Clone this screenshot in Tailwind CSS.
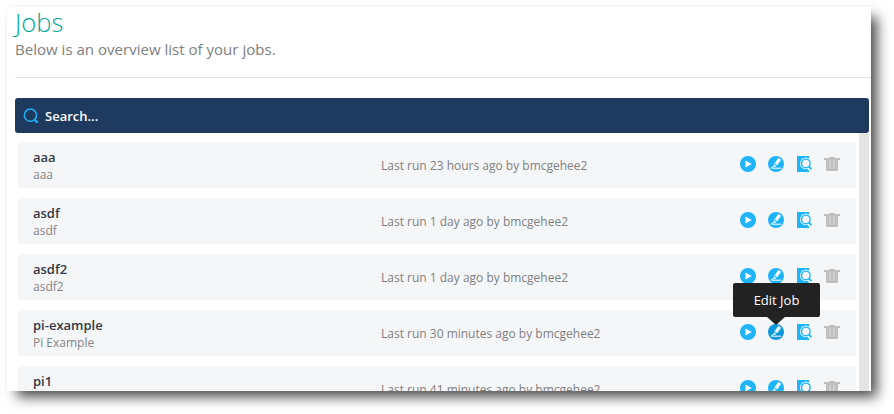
<!DOCTYPE html>
<html lang="en">
<head>
<meta charset="utf-8">
<title>Jobs</title>
<script src="https://cdn.jsdelivr.net/npm/@tailwindcss/browser@4"></script>
</head>
<body class="bg-white w-[894px] h-[414px] overflow-hidden p-[7px] font-['Open_Sans','Noto_Sans',sans-serif]">
<svg class="hidden">
  <symbol id="play" viewBox="0 0 16 16"><circle cx="8" cy="8" r="8" fill="currentColor"/><path d="M5.5 4.4 11.7 8 5.5 11.6Z" fill="#fff"/></symbol>
  <symbol id="edit" viewBox="0 0 16 16"><circle cx="8" cy="8" r="8" fill="currentColor"/><path d="M10.3 1.8 13.2 3.8 9.4 9.2 6.4 7.4ZM6 8.2 8.6 9.9 5 11.2Z" fill="#fff" fill-opacity=".9"/><path d="M3.3 12.2H13.2M3.3 11.6 5.5 10.6" stroke="#fff" stroke-width="1" fill="none"/></symbol>
  <symbol id="view" viewBox="0 0 16 16"><path d="M1 0H13V16H1Z" fill="currentColor"/><circle cx="9.8" cy="7.4" r="5.8" fill="#f5f6f8"/><path d="m12.5 11 2.6 2.6" stroke="#f5f6f8" stroke-width="4"/><circle cx="9.8" cy="7.4" r="4.3" fill="none" stroke="currentColor" stroke-width="1.4"/><path d="m12.8 10.4 2.6 2.6" stroke="currentColor" stroke-width="2"/></symbol>
  <symbol id="trash" viewBox="0 0 16 16"><path d="M0 2H5V1H11V2H16V4H14V15H2V4H0Z" fill="#bfbfbf"/><path d="M6 5V12.5M10 5V12.5" stroke="#dedad8" stroke-width="1.2"/></symbol>
</svg>
<main class="relative w-[864px] h-[384px] bg-white shadow-[8px_8px_12px_-2px_rgba(0,0,0,0.7),0_0_4px_rgba(0,0,0,0.04)]">
  <div class="h-full overflow-hidden pl-2">
    <header class="h-[71px] border-b border-[#e1e1e1]">
      <h1 class="h-8 text-[25.5px] leading-[30px] font-light text-[#00a99d]">Jobs</h1>
      <p class="text-[15.05px] leading-5 text-[#808080]">Below is an overview list of your jobs.</p>
    </header>
    <div class="mt-5 mr-0.5 h-[35px] rounded-[3px] bg-[#1e3a5f] flex items-center pl-2 pt-px">
      <svg class="w-4 h-4" viewBox="0 0 16 16" fill="none" stroke="#1fb0f5"><circle cx="7.4" cy="7.2" r="6.1" stroke-width="1.5"/><path d="m11.7 11.7 3 3" stroke-width="2.3"/></svg>
      <span class="ml-1.5 text-[13px] leading-5 font-semibold text-white">Search...</span>
    </div>
    <div class="flex mr-0.5">
      <ul id="jobs" class="w-[841px] mr-[3px] pl-[3px] pt-[9px] flex flex-col gap-2.5"></ul>
      <div class="w-2.5 bg-[#e4e4e4]"></div>
    </div>
  </div>
  <div class="absolute left-[726px] top-[276px] w-[87px] h-[34px] rounded-[2px] bg-[#222] text-white text-[13px] leading-[34px] text-center">Edit Job
    <svg class="absolute left-[33px] top-[33px] w-5 h-[9px]" viewBox="0 0 20 9"><path d="M0 0H20L10 9Z" fill="#222"/></svg>
  </div>
</main>
<template id="row">
  <li class="h-[46px] shrink-0 rounded-[3px] bg-[#f5f6f8] flex pl-[15px]">
    <div class="w-[348px] pt-1.5">
      <div class="name text-[13px] leading-[18px] font-semibold text-[#333a45]"></div>
      <div class="desc text-[12px] leading-[18px] text-[#858585]"></div>
    </div>
    <div class="run w-[359px] pt-[15px] text-[12px] leading-[18px] text-[#808080]"></div>
    <div class="flex gap-3 pt-3.5 text-[#1fb4fa]">
      <svg class="w-4 h-4"><use href="#play"/></svg>
      <svg class="edit w-4 h-4"><use href="#edit"/></svg>
      <svg class="w-4 h-4"><use href="#view"/></svg>
      <svg class="w-4 h-4"><use href="#trash"/></svg>
    </div>
  </li>
</template>
<script>
const jobs = [
  ['aaa', 'aaa', '23 hours'],
  ['asdf', 'asdf', '1 day'],
  ['asdf2', 'asdf2', '1 day'],
  ['pi-example', 'Pi Example', '30 minutes'],
  ['pi1', 'pi1', '41 minutes']
];
for (const [name, desc, ago] of jobs) {
  const row = document.getElementById('row').content.cloneNode(true);
  row.querySelector('.name').textContent = name;
  row.querySelector('.desc').textContent = desc;
  row.querySelector('.run').textContent = `Last run ${ago} ago by bmcgehee2`;
  if (name === 'pi-example') row.querySelector('.edit').classList.add('text-[#0b98dc]');
  document.getElementById('jobs').append(row);
}
</script>
</body>
</html>
